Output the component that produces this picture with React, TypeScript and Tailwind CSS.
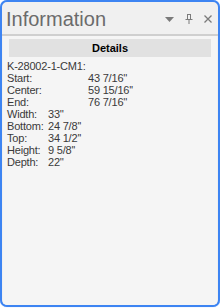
import React from 'react';

const rows: { label: string; value: string; wide?: boolean }[] = [
  { label: 'Start:', value: "43 7/16''", wide: true },
  { label: 'Center:', value: "59 15/16''", wide: true },
  { label: 'End:', value: "76 7/16''", wide: true },
  { label: 'Width:', value: "33''" },
  { label: 'Bottom:', value: "24 7/8''" },
  { label: 'Top:', value: "34 1/2''" },
  { label: 'Height:', value: "9 5/8''" },
  { label: 'Depth:', value: "22''" },
];

const App: React.FC = () => {
  return (
    <div className="w-[220px] h-[308px] bg-white p-0">
      <div className="w-[220px] h-[307px] rounded-[7px] border-2 border-[#3d84f2] bg-[#f0f0f0] flex flex-col overflow-hidden shadow-[0_0_1px_#8fb8f8]">
        <div className="h-[32px] flex items-center pl-[4px] pr-[6px]">
          <span
            className="text-[20px] text-[#6b6b6b] leading-none flex-1 pt-[1px]"
            style={{ fontFamily: '"Liberation Sans", Arial, sans-serif' }}
          >
            Information
          </span>
          <div className="flex items-center gap-[9px] text-[#777777] mt-[2px]">
            <svg width="9" height="5" viewBox="0 0 9 5">
              <path d="M0 0h9L4.5 5z" fill="#7a7a7a" />
            </svg>
            <svg width="8" height="10" viewBox="0 0 8 10" className="ml-[2px]">
              <path d="M2 0.5h4M2.5 0.5v5M5.5 0.5v5M0.5 5.5h7M4 5.5v4.5" stroke="#7a7a7a" strokeWidth="1" fill="none" />
            </svg>
            <svg width="8" height="8" viewBox="0 0 8 8" className="ml-[2px]">
              <path d="M0.5 0.5l7 7M7.5 0.5l-7 7" stroke="#7a7a7a" strokeWidth="1.3" fill="none" />
            </svg>
          </div>
        </div>
        <div className="h-[2px] bg-[#cfcfcf] mx-0" />
        <div className="flex-1 bg-[#f5f5f5] mx-[1px] pt-[3px] px-[4px]">
          <div
            className="h-[18px] bg-[#e1e1e1] flex items-center justify-center mx-[2px] text-[11px] font-bold text-black"
            style={{ fontFamily: '"Liberation Sans", Arial, sans-serif' }}
          >
            Details
          </div>
          <div
            className="text-[11px] leading-[12px] text-[#3a3a3a] pt-[3px] tracking-[-0.2px]"
            style={{ fontFamily: '"Liberation Sans", Arial, sans-serif' }}
          >
            <div>K-28002-1-CM1:</div>
            {rows.map((r) => (
              <div key={r.label} className="flex">
                <span className={r.wide ? 'w-[81px] shrink-0' : 'w-[41px] shrink-0'}>{r.label}</span>
                <span>{r.value}</span>
              </div>
            ))}
          </div>
        </div>
      </div>
    </div>
  );
};

export default App;
